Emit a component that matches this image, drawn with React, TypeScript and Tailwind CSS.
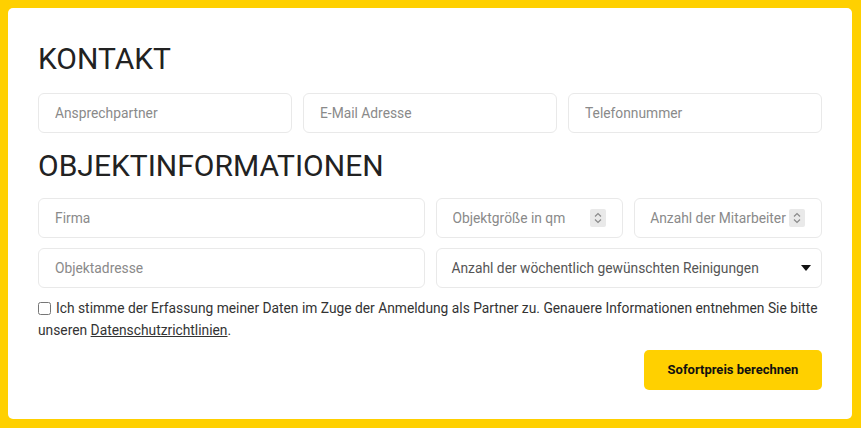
import { useState } from 'react';

function Spinner() {
  return (
    <span className="flex h-[18px] w-[16px] items-center justify-center rounded-[2px] bg-[#e9e9e9]">
      <svg width="8" height="12" viewBox="0 0 8 12" fill="none" stroke="#8a8a8a" strokeWidth="1.2">
        <path d="M1 4.5 L4 1.5 L7 4.5" />
        <path d="M1 7.5 L4 10.5 L7 7.5" />
      </svg>
    </span>
  );
}

function Field({ placeholder, spinner = false }: { placeholder: string; spinner?: boolean }) {
  return (
    <div className="flex h-10 items-center rounded-[6px] border border-[#e9e9e9] bg-white pl-[16px] pr-[16px]">
      <input
        placeholder={placeholder}
        className="min-w-0 flex-1 bg-transparent text-[13.8px] text-[#333] outline-none placeholder:text-[#8a8a8a]"
      />
      {spinner && <Spinner />}
    </div>
  );
}

export default function App() {
  const [checked, setChecked] = useState(false);

  return (
    <div
      className="min-h-[428px] w-full bg-[#ffd000] pb-2 pl-2 pr-[9px] pt-2"
      style={{ fontFamily: 'Roboto, "Liberation Sans", sans-serif' }}
    >
      <div className="rounded-[5px] bg-white px-[30px] pb-[29px] pt-[33px]">
        {/* Kontakt */}
        <h2 className="text-[30px] font-normal leading-[36px] text-[#222]">KONTAKT</h2>
        <div className="mt-4 grid grid-cols-3 gap-[11px]">
          <Field placeholder="Ansprechpartner" />
          <Field placeholder="E-Mail Adresse" />
          <Field placeholder="Telefonnummer" />
        </div>

        {/* Objektinformationen */}
        <h2 className="mt-[15px] text-[30px] font-normal leading-[36px] text-[#222]">
          OBJEKTINFORMATIONEN
        </h2>
        <div className="mt-[14px] grid grid-cols-2 gap-x-[11px] gap-y-[10px]">
          <Field placeholder="Firma" />
          <div className="grid grid-cols-2 gap-[11px]">
            <Field placeholder="Objektgröße in qm" spinner />
            <div className="flex h-10 items-center rounded-[6px] border border-[#e9e9e9] bg-white pl-[15px] pr-[16px]">
              <span className="flex-1 whitespace-nowrap text-[13.8px] text-[#8a8a8a]">Anzahl der Mitarbeiter</span>
              <Spinner />
            </div>
          </div>
          <Field placeholder="Objektadresse" />
          <div className="flex h-10 items-center justify-between rounded-[6px] border border-[#e9e9e9] bg-white pl-[15px] pr-[10px]">
            <span className="text-[13.8px] text-[#555]">Anzahl der wöchentlich gewünschten Reinigungen</span>
            <svg width="10" height="6" viewBox="0 0 10 6">
              <path d="M0 0 H10 L5 6 Z" fill="#111" />
            </svg>
          </div>
        </div>

        {/* Zustimmung */}
        <label className="mt-[9px] block text-[13.8px] leading-[22px] text-[#333]">
          <input
            type="checkbox"
            checked={checked}
            onChange={() => setChecked(!checked)}
            className="mr-[5px] inline-block h-[13px] w-[13px] align-[-2px]"
          />
          Ich stimme der Erfassung meiner Daten im Zuge der Anmeldung als Partner zu. Genauere Informationen entnehmen Sie bitte unseren{' '}
          <a className="underline" href="#">Datenschutzrichtlinien</a>.
        </label>

        <div className="mt-[9px] flex justify-end">
          <button className="h-10 w-[178px] rounded-[5px] bg-[#ffd000] text-[13px] font-bold text-[#111]">
            Sofortpreis berechnen
          </button>
        </div>
      </div>
    </div>
  );
}
